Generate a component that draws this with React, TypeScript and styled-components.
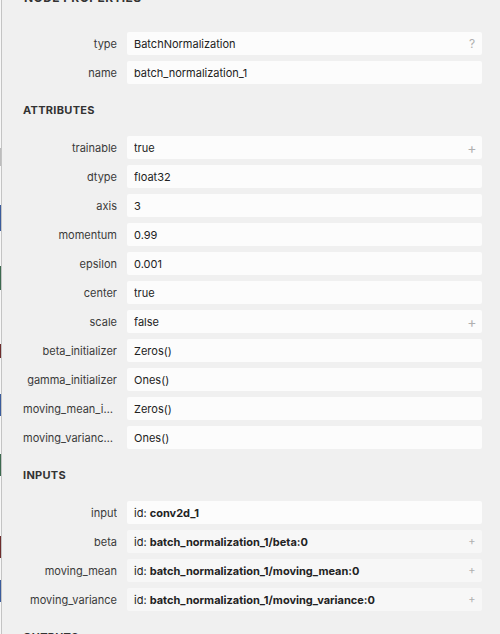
import React from 'react'
import styled, { createGlobalStyle } from 'styled-components'

const GlobalStyle = createGlobalStyle`
  html, body {
    margin: 0;
    padding: 0;
    width: 500px;
    height: 634px;
    overflow: hidden;
    background: #ffffff;
  }
  body {
    font-family: Inter, "Noto Sans", "Liberation Sans", sans-serif;
    -webkit-font-smoothing: antialiased;
  }
`

const Screen = styled.div`
  display: flex;
  width: 500px;
  height: 634px;
  overflow: hidden;
`

const GraphEdge = styled.svg`
  flex: 0 0 1px;
  width: 1px;
  height: 634px;
  display: block;
`

const Sidebar = styled.div`
  flex: 1;
  height: 634px;
  background: #f0f0f0;
  border-left: 1px solid #c4c4c4;
  overflow: hidden;
  padding: 0 18px 0 20px;
  box-sizing: border-box;
`

const Title = styled.div`
  margin-top: -10px;
  margin-left: 2px;
  height: 16px;
  line-height: 16px;
  font-size: 12px;
  font-weight: 700;
  letter-spacing: 0.4px;
  color: #333;
  text-transform: uppercase;
`

const SectionHeader = styled.div`
  margin: 18px 0 18px 1px;
  height: 16px;
  line-height: 16px;
  font-size: 11px;
  font-weight: 700;
  letter-spacing: 0.3px;
  color: #333;
  text-transform: uppercase;
`

const List = styled.div<{ $top?: number }>`
  display: flex;
  flex-direction: column;
  gap: 6px;
  margin-top: ${({ $top }) => $top ?? 0}px;
`

const Row = styled.div`
  display: flex;
  align-items: center;
  height: 23px;
`

const Label = styled.div`
  flex: 0 0 94px;
  margin-left: 1px;
  margin-right: 10px;
  text-align: right;
  font-size: 11px;
  color: #3a3a3a;
  white-space: nowrap;
  overflow: hidden;
  text-overflow: ellipsis;
`

const Value = styled.div<{ $shade?: boolean }>`
  flex: 1;
  height: 23px;
  display: flex;
  align-items: center;
  padding: 0 4px 0 7px;
  background: ${({ $shade }) => ($shade ? '#f7f7f7' : '#fcfcfc')};
  border-radius: 2px;
  font-size: 11px;
  color: #222;
  white-space: nowrap;
  overflow: hidden;
`

const ValueText = styled.span`
  flex: 1;
  overflow: hidden;
  text-overflow: ellipsis;
`

const Strong = styled.b`
  font-weight: 700;
`

const Toggle = styled.span<{ $size?: number }>`
  flex: 0 0 auto;
  width: 12px;
  text-align: center;
  font-size: ${({ $size }) => $size ?? 13}px;
  color: #b0b0b0;
  line-height: 1;
`

type Prop = { name: string; value: React.ReactNode; mark?: '+' | '?'; shade?: boolean }

const nodeProps: Prop[] = [
  { name: 'type', value: 'BatchNormalization', mark: '?' },
  { name: 'name', value: 'batch_normalization_1' },
]

const attributes: Prop[] = [
  { name: 'trainable', value: 'true', mark: '+' },
  { name: 'dtype', value: 'float32' },
  { name: 'axis', value: '3' },
  { name: 'momentum', value: '0.99' },
  { name: 'epsilon', value: '0.001' },
  { name: 'center', value: 'true' },
  { name: 'scale', value: 'false', mark: '+' },
  { name: 'beta_initializer', value: 'Zeros()' },
  { name: 'gamma_initializer', value: 'Ones()' },
  { name: 'moving_mean_initializer', value: 'Zeros()' },
  { name: 'moving_variance_initializer', value: 'Ones()' },
]

const inputId = (id: string) => (
  <>
    id: <Strong>{id}</Strong>
  </>
)

const inputs: Prop[] = [
  { name: 'input', value: inputId('conv2d_1') },
  { name: 'beta', value: inputId('batch_normalization_1/beta:0'), mark: '+', shade: true },
  { name: 'moving_mean', value: inputId('batch_normalization_1/moving_mean:0'), mark: '+', shade: true },
  { name: 'moving_variance', value: inputId('batch_normalization_1/moving_variance:0'), mark: '+', shade: true },
]

function PropertyList({ items, top }: { items: Prop[]; top?: number }) {
  return (
    <List $top={top}>
      {items.map((p) => (
        <Row key={p.name}>
          <Label>{p.name}</Label>
          <Value $shade={p.shade}>
            <ValueText>{p.value}</ValueText>
            {p.mark && <Toggle $size={p.mark === '?' ? 12 : p.shade ? 11 : 14}>{p.mark}</Toggle>}
          </Value>
        </Row>
      ))}
    </List>
  )
}

// sliver of the graph canvas peeking out behind the sidebar
const edgeMarks = [
  { y: 148, h: 18, c: '#bdbdbd' },
  { y: 205, h: 26, c: '#3b5c9c' },
  { y: 266, h: 24, c: '#3d6a4f' },
  { y: 344, h: 14, c: '#6d2c2c' },
  { y: 394, h: 22, c: '#3b5c9c' },
  { y: 454, h: 22, c: '#3d6a4f' },
  { y: 536, h: 22, c: '#6d2c2c' },
  { y: 580, h: 22, c: '#3b5c9c' },
]

export default function App() {
  return (
    <>
      <GlobalStyle />
      <Screen>
        <GraphEdge viewBox="0 0 1 634" preserveAspectRatio="none">
          <rect x="0" y="0" width="1" height="634" fill="#f7f7f7" />
          {edgeMarks.map((m) => (
            <rect key={m.y} x="0" y={m.y} width="1" height={m.h} fill={m.c} />
          ))}
        </GraphEdge>
        <Sidebar>
          <Title>Node Properties</Title>
          <PropertyList items={nodeProps} top={26} />
          <SectionHeader>Attributes</SectionHeader>
          <PropertyList items={attributes} />
          <SectionHeader>Inputs</SectionHeader>
          <PropertyList items={inputs} />
          <SectionHeader>Outputs</SectionHeader>
        </Sidebar>
      </Screen>
    </>
  )
}
